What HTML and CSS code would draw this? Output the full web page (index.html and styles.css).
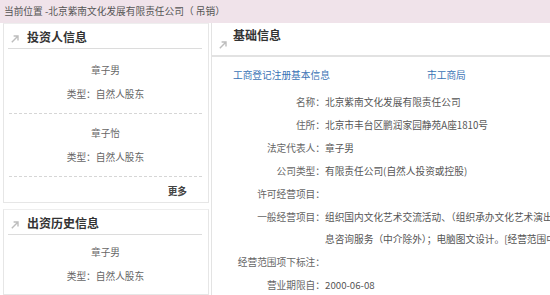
FILE: index.html
```
<html>
    <head>
        <meta charset="utf-8">
        <link rel="stylesheet" href="styles.css">
    </head>
    <body>
        <div class="crumb">当前位置 -北京紫南文化发展有限责任公司（ 吊销）</div>

        <div class="main">
            <div class="side">
                <div class="box">
                    <div class="box-title">
                        <svg class="arrow" width="8" height="8" viewBox="0 0 8 8"><path d="M0.8 7.2 L7 1 M2.6 1 H7 V5.4" fill="none" stroke="#bdbdbd" stroke-width="1.4"/></svg>
                        <span class="name">投资人信息</span>
                    </div>
                    <ul class="people">
                        <li class="person first"><p>章子男</p><p>类型：自然人股东</p></li>
                        <li class="person"><p>章子怡</p><p>类型：自然人股东</p></li>
                    </ul>
                    <div class="more">更多</div>
                </div>

                <div class="box second">
                    <div class="box-title">
                        <svg class="arrow" width="8" height="8" viewBox="0 0 8 8"><path d="M0.8 7.2 L7 1 M2.6 1 H7 V5.4" fill="none" stroke="#bdbdbd" stroke-width="1.4"/></svg>
                        <span class="name">出资历史信息</span>
                    </div>
                    <ul class="people">
                        <li class="person only"><p>章子男</p><p>类型：自然人股东</p></li>
                    </ul>
                </div>
            </div>

            <div class="basic">
                <div class="basic-head">
                    <svg class="arrow" width="8" height="8" viewBox="0 0 8 8"><path d="M0.8 7.2 L7 1 M2.6 1 H7 V5.4" fill="none" stroke="#bdbdbd" stroke-width="1.4"/></svg>
                    <span class="name">基础信息</span>
                </div>

                <div class="links">
                    <span class="link">工商登记注册基本信息</span>
                    <span class="link office">市工商局</span>
                </div>

                <dl class="rows">
                    <div class="row"><dt>名称：</dt><dd>北京紫南文化发展有限责任公司</dd></div>
                    <div class="row"><dt>住所：</dt><dd>北京市丰台区鹏润家园静苑A座1810号</dd></div>
                    <div class="row"><dt>法定代表人：</dt><dd>章子男</dd></div>
                    <div class="row"><dt>公司类型：</dt><dd>有限责任公司(自然人投资或控股)</dd></div>
                    <div class="row"><dt>许可经营项目：</dt><dd></dd></div>
                    <div class="row"><dt>一般经营项目：</dt><dd class="clip">组织国内文化艺术交流活动、（组织承办文化艺术演出活动）；技术推广；经济信<br>息咨询服务（中介除外）；电脑图文设计。[经营范围中属于法律、法规规定应经审批的项目]</dd></div>
                    <div class="row"><dt>经营范围项下标注：</dt><dd></dd></div>
                    <div class="row"><dt>营业期限自：</dt><dd>2000-06-08</dd></div>
                </dl>
            </div>
        </div>
    </body>
</html>
```

FILE: styles.css
```
body {
    margin: 0;
    overflow: hidden;
    background: #fff;
    font-family: "Noto Sans CJK SC", "Noto Sans", sans-serif;
    font-size: 9.7px;
    color: #666;
}
p, ul, dl, dd {
    margin: 0;
    padding: 0;
}
ul {
    list-style: none;
}

.crumb {
    height: 23px;
    line-height: 23px;
    padding-left: 4px;
    background: #f0e3ea;
    color: #555;
    white-space: nowrap;
}

.main {
    display: flex;
    align-items: flex-start;
}

.side {
    width: 206px;
    margin-left: 3px;
    flex-shrink: 0;
}

.box {
    border: 1px solid #e6e6e6;
    border-top: 1px solid #eeeeee;
}
.box.second {
    margin-top: 6px;
}

.box-title {
    display: flex;
    align-items: center;
    height: 24px;
    margin: 0 6px 0 4px;
    border-bottom: 1px solid #dcdcdc;
}
.box-title .arrow {
    margin: 5px 8px 0 3px;
}
.name {
    font-size: 12px;
    font-weight: bold;
    color: #333;
}

.person {
    margin: 0 6px 0 5px;
    padding: 7px 0 7px;
    border-bottom: 1px dashed #d6d6d6;
    text-align: center;
    line-height: 24px;
}
.person.first {
    padding-top: 9px;
}
.person.only {
    border-bottom: none;
    padding-top: 5px;
    padding-bottom: 6px;
}

.more {
    height: 24px;
    padding-top: 1px;
    line-height: 26px;
    text-align: right;
    padding-right: 21px;
    font-weight: bold;
    color: #444;
}

.basic {
    flex: 1;
    min-width: 0;
    margin-left: 2px;
    min-height: 280px;
    border-left: 1px solid #e3e3e3;
    white-space: nowrap;
}

.basic-head {
    display: flex;
    align-items: flex-start;
    height: 32px;
    padding-left: 7px;
    border-bottom: 2px solid #e2e2e2;
}
.basic-head .arrow {
    margin: 18px 6px 0 0;
}
.basic-head .name {
    line-height: 24px;
}

.links {
    margin-top: 7px;
    padding-left: 21px;
    line-height: 23px;
}
.link {
    color: #3a73b5;
}
.link.office {
    margin-left: 95px;
}

.rows {
    margin-top: 4px;
}
.row {
    display: flex;
    line-height: 22.9px;
}
.row dt {
    width: 113px;
    flex-shrink: 0;
    text-align: right;
    color: #666;
}
.row dd {
    color: #555;
}
.row dd.clip {
    min-width: 0;
    overflow: hidden;
}
```
